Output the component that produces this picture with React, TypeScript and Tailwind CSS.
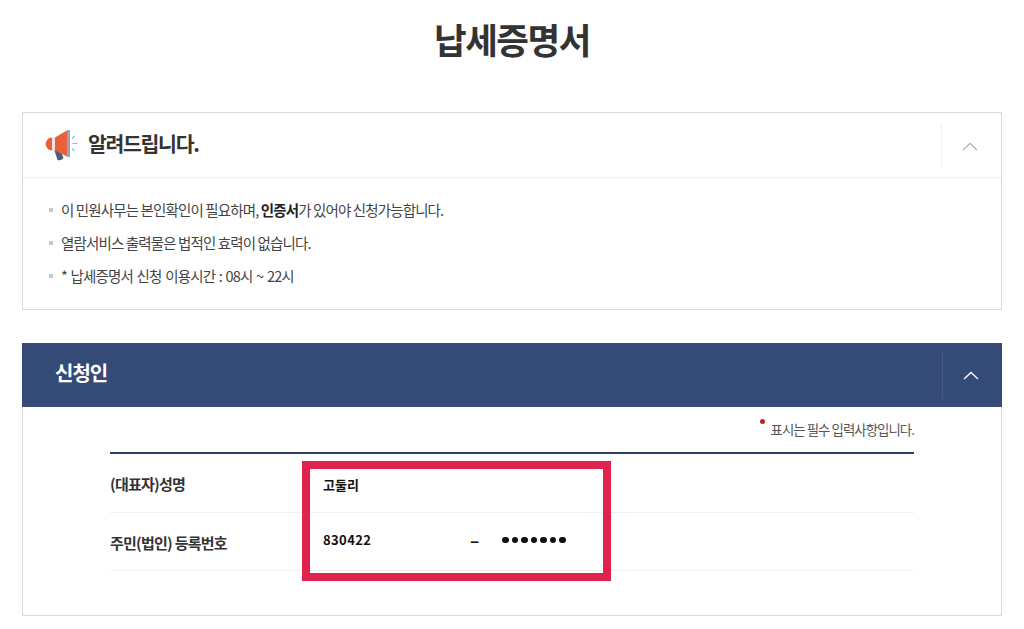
const font = "font-['Noto_Sans_CJK_KR','Noto_Sans',sans-serif]";

function Chevron({ className }: { className: string }) {
  return (
    <svg width="16" height="9" viewBox="0 0 16 9" fill="none" className={className}>
      <path d="M1 8 L8 1.5 L15 8" stroke="currentColor" strokeWidth="1.3" />
    </svg>
  );
}

function Megaphone() {
  return (
    <svg width="34" height="32" viewBox="0 0 34 32" className="shrink-0">
      <path d="M10 20 L16 20 L19.5 29 Q17 32 13.5 31 Z" fill="#4b6078" />
      <path d="M5 9 L9 8.5 L9 21.5 L5 21 Q-2 15 5 9 Z" fill="#e8603c" />
      <rect x="8" y="8.5" width="3" height="13" fill="#f0e4dc" />
      <path d="M11 8.5 L22 2 L25 2 L25 27 L22 27 L11 21.5 Z" fill="#e8603c" />
      <path d="M23 1 L26 1 L26 28 L23 28 Z" fill="#9aa4b0" />
      <path d="M28 9.5 L30.5 7 M28.5 14.5 L33.5 14.5 M28 19.5 L30.5 22" stroke="#a9b1bb" strokeWidth="1.2" fill="none" />
    </svg>
  );
}

function Notice({ children }: { children: React.ReactNode }) {
  return (
    <li className="flex items-center h-[33px] text-[14.5px] tracking-[-0.06em] text-[#444]">
      <span className="w-[4px] h-[4px] bg-[#c8c8c8] mr-[8px] shrink-0" />
      <span>{children}</span>
    </li>
  );
}

function Row({ label, height, children }: { label: string; height: string; children: React.ReactNode }) {
  return (
    <div className={`flex items-center ${height} border-b border-[#f1f1f1]`}>
      <div className="w-[213px] pt-[3px] text-[15px] font-semibold tracking-[-0.05em] text-[#333]">{label}</div>
      <div className="flex-1 flex items-center text-[13px] font-bold text-[#111]">{children}</div>
    </div>
  );
}

export default function App() {
  return (
    <div className={`${font} relative w-[1024px] h-[629px] overflow-hidden bg-white px-[22px]`}>
      <h1 className="h-[112px] pt-[13px] text-center text-[35.5px] leading-[52px] font-semibold tracking-[-0.04em] text-[#333]">
        납세증명서
      </h1>

      <section className="w-[980px] h-[198px] border border-[#d9d9d9]">
        <div className="flex items-center h-[65px] border-b border-[#eeeeee]">
          <div className="flex-1 flex items-center pl-[21px] gap-[10px]">
            <Megaphone />
            <h2 className="-mt-[3px] text-[20.5px] font-bold tracking-[-0.065em] text-[#333]">알려드립니다.</h2>
          </div>
          <div className="flex items-center justify-center w-[60px] h-[44px] pr-[4px] border-l border-[#f0f0f0] text-[#b5b5b5]">
            <Chevron className="mt-[2px]" />
          </div>
        </div>
        <ul className="pt-[15px] pl-[26px]">
          <Notice>
            이 민원사무는 본인확인이 필요하며, <b className="font-bold text-[#222]">인증서</b>가 있어야 신청가능합니다.
          </Notice>
          <Notice>열람서비스 출력물은 법적인 효력이 없습니다.</Notice>
          <Notice>
            <span className="[word-spacing:1.3px]">* 납세증명서 신청 이용시간 : 08시 ~ 22시</span>
          </Notice>
        </ul>
      </section>

      <section className="w-[980px] h-[273px] mt-[33px] border border-[#d9d9d9] border-t-0">
        <div className="flex items-center h-[64px] -mx-px bg-[#344b78]">
          <h2 className="flex-1 pl-[33px] pb-[4px] text-[20px] font-bold tracking-[-0.05em] text-white">신청인</h2>
          <div className="flex items-center justify-center w-[60px] h-[48px] pr-[4px] border-l border-[#44598a] text-white">
            <Chevron className="mt-[1px]" />
          </div>
        </div>
        <div className="pl-[87px] pr-[87px]">
          <p className="h-[45px] pt-[12px] text-right text-[13.4px] tracking-[-0.07em] text-[#555]">
            <span className="inline-block w-[5px] h-[5px] rounded-full bg-[#c8201e] mr-[6px] relative top-[-11px]" />
            표시는 필수 입력사항입니다.
          </p>
          <div className="border-t-2 border-[#2f3f63]">
            <Row label="(대표자)성명" height="h-[59px]">
              <span className="pt-[3px]">고둘리</span>
            </Row>
            <Row label="주민(법인) 등록번호" height="h-[58px]">
              <span className="w-[147px] -mt-[4px] tracking-[0.03em]">830422</span>
              <span className="w-[32px] -mt-[3px] text-[17px]">–</span>
              <span className="flex gap-[3px] -mt-[3px]">
                {Array.from({ length: 7 }).map((_, i) => (
                  <span key={i} className="w-[6.5px] h-[6.5px] rounded-full bg-[#111]" />
                ))}
              </span>
            </Row>
          </div>
        </div>
      </section>

      {/* annotation drawn over the form */}
      <div className="absolute left-[302px] top-[461px] w-[309px] h-[120px] border-[8px] border-[#e0234e]" />
    </div>
  );
}
